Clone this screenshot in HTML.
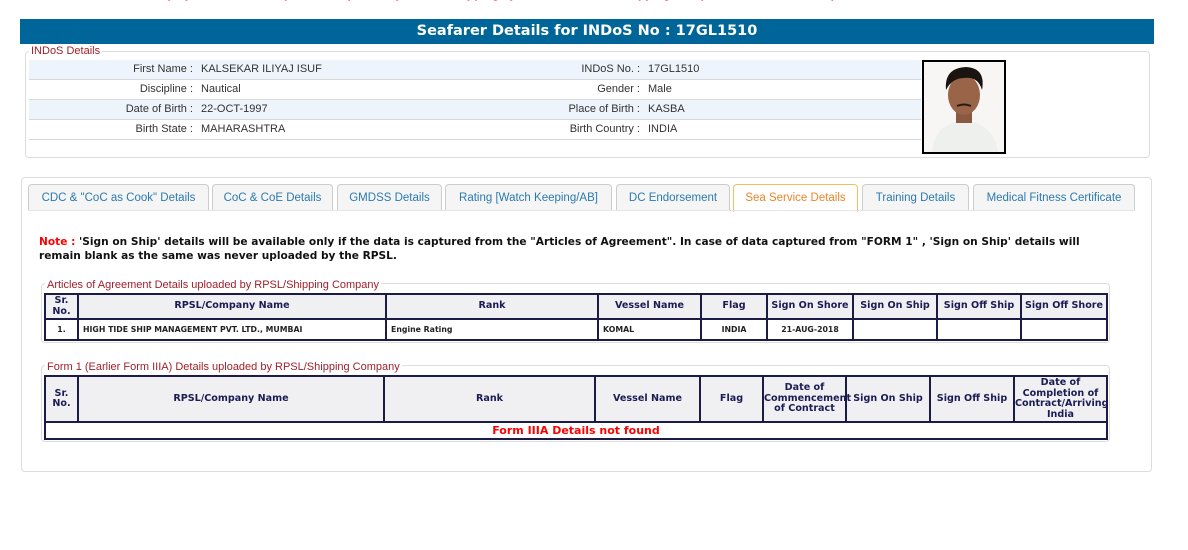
<!DOCTYPE html>
<html><head><meta charset="utf-8"><style>
*{box-sizing:border-box;margin:0;padding:0}
body{width:1188px;height:550px;background:#fff;position:relative;overflow:hidden;font-family:"Liberation Sans",Arial,sans-serif}
.abs{position:absolute}
.topred{left:20px;top:-13px;font-size:12px;color:#e00;font-weight:bold;white-space:nowrap}
.hdr{left:20px;top:19px;width:1134px;height:25px;background:#006699;color:#fff;font-family:"DejaVu Sans",Verdana,sans-serif;font-weight:bold;font-size:14.5px;text-align:center;line-height:25px}
.fs{border:1px solid #ddd;border-radius:4px}
.legend{font-size:11px;color:#a0202a;background:#fff;padding:0 2px;line-height:12px}
.row{left:29px;width:892px;height:20px;border-bottom:1px solid #d8d8d8;font-size:11px;color:#333;line-height:19px}
.row.a{background:#eef4fb}
.row span{position:absolute;white-space:nowrap}
.l1{right:728px}.v1{left:172px}.l2{right:281px}.v2{left:619px}
.tab{top:184px;height:27px;border:1px solid #ccc;border-bottom:none;border-radius:4px 4px 0 0;background:#f5f5f5;color:#2a7ab0;font-size:11.5px;text-align:center;line-height:26px}
.tab.on{background:#fff;border-color:#f0c060;color:#e8862a;height:28px}
.note{left:39px;top:236px;font-family:"DejaVu Sans",Verdana,sans-serif;font-weight:bold;font-size:10.6px;line-height:13.5px;color:#111;width:1080px}
table{position:absolute;border-collapse:collapse;border:2px solid #1b1b45;font-family:"DejaVu Sans",Verdana,sans-serif;font-weight:bold;color:#1b1b55;table-layout:fixed}
th{background:#f0f0f2;border:2px solid #1b1b45;font-size:9.6px;line-height:10.5px;padding:0;text-align:center}
td{border:2px solid #1b1b45;font-size:7.8px;color:#222;padding:0 4px}
</style></head><body>
<div class="abs topred">Note : Seafarer details displayed below are as per data captured by the DG Shipping system from RPSL / Shipping Companies and institutes uploaded data</div>
<div class="abs hdr">Seafarer Details for INDoS No : 17GL1510</div>
<div class="abs fs" style="left:25px;top:51px;width:1125px;height:107px"></div>
<div class="abs legend" style="left:29px;top:45px">INDoS Details</div>
<div class="abs row a" style="top:60px"><span class="l1">First Name :</span><span class="v1">KALSEKAR ILIYAJ ISUF</span><span class="l2">INDoS No. :</span><span class="v2">17GL1510</span></div>
<div class="abs row" style="top:80px"><span class="l1">Discipline :</span><span class="v1">Nautical</span><span class="l2">Gender :</span><span class="v2">Male</span></div>
<div class="abs row a" style="top:100px"><span class="l1">Date of Birth :</span><span class="v1">22-OCT-1997</span><span class="l2">Place of Birth :</span><span class="v2">KASBA</span></div>
<div class="abs row" style="top:120px"><span class="l1">Birth State :</span><span class="v1">MAHARASHTRA</span><span class="l2">Birth Country :</span><span class="v2">INDIA</span></div>
<div class="abs" style="left:922px;top:60px;width:84px;height:94px;border:2px solid #000;background:#fafafa;overflow:hidden">
<svg width="80" height="90" viewBox="0 0 80 90"><rect width="80" height="90" fill="#f8f6f4"/><path d="M8 90 Q10 62 40 58 Q70 62 74 90Z" fill="#eef0ee"/><rect x="32" y="45" width="16" height="16" fill="#8a5a40"/><ellipse cx="40" cy="33" rx="16" ry="20" fill="#9a6448"/><path d="M22 28 Q20 6 42 5 Q62 6 58 28 Q54 14 40 16 Q28 16 22 28Z" fill="#1a1410"/><path d="M33 44 Q40 41 47 44" stroke="#2a1a10" stroke-width="2" fill="none"/></svg></div>

<div class="abs fs" style="left:21px;top:177px;width:1131px;height:295px"></div>
<div class="abs tab" style="left:28px;width:181px">CDC &amp; "CoC as Cook" Details</div>
<div class="abs tab" style="left:212px;width:121px">CoC &amp; CoE Details</div>
<div class="abs tab" style="left:337px;width:105px">GMDSS Details</div>
<div class="abs tab" style="left:445px;width:167px">Rating [Watch Keeping/AB]</div>
<div class="abs tab" style="left:616px;width:114px">DC Endorsement</div>
<div class="abs tab on" style="left:733px;width:125px">Sea Service Details</div>
<div class="abs tab" style="left:862px;width:107px">Training Details</div>
<div class="abs tab" style="left:973px;width:162px">Medical Fitness Certificate</div>
<div class="abs" style="left:28px;top:210px;width:1107px;height:1px;background:#e4e4e4"></div>

<div class="abs note"><span style="color:#f00">Note :</span> 'Sign on Ship' details will be available only if the data is captured from the "Articles of Agreement". In case of data captured from "FORM 1" , 'Sign on Ship' details will remain blank as the same was never uploaded by the RPSL.</div>

<div class="abs fs" style="left:41px;top:283px;width:1069px;height:60px"></div>
<div class="abs legend" style="left:45px;top:279px">Articles of Agreement Details uploaded by RPSL/Shipping Company</div>
<table style="left:44px;top:293px;width:1062px">
<colgroup><col style="width:33px"><col style="width:308px"><col style="width:212px"><col style="width:103px"><col style="width:66px"><col style="width:86px"><col style="width:84px"><col style="width:84px"><col style="width:86px"></colgroup>
<tr style="height:25px"><th>Sr.<br>No.</th><th>RPSL/Company Name</th><th>Rank</th><th>Vessel Name</th><th>Flag</th><th>Sign On Shore</th><th>Sign On Ship</th><th>Sign Off Ship</th><th>Sign Off Shore</th></tr>
<tr style="height:21px"><td style="text-align:center">1.</td><td>HIGH TIDE SHIP MANAGEMENT PVT. LTD., MUMBAI</td><td>Engine Rating</td><td>KOMAL</td><td style="text-align:center">INDIA</td><td style="text-align:center">21-AUG-2018</td><td></td><td></td><td></td></tr>
</table>

<div class="abs fs" style="left:41px;top:365px;width:1069px;height:77px"></div>
<div class="abs legend" style="left:45px;top:361px">Form 1 (Earlier Form IIIA) Details uploaded by RPSL/Shipping Company</div>
<table style="left:44px;top:375px;width:1062px">
<colgroup><col style="width:33px"><col style="width:306px"><col style="width:211px"><col style="width:105px"><col style="width:63px"><col style="width:83px"><col style="width:84px"><col style="width:84px"><col style="width:93px"></colgroup>
<tr style="height:46px"><th>Sr.<br>No.</th><th>RPSL/Company Name</th><th>Rank</th><th>Vessel Name</th><th>Flag</th><th>Date of Commencement of Contract</th><th>Sign On Ship</th><th>Sign Off Ship</th><th>Date of Completion of Contract/Arriving India</th></tr>
<tr style="height:17px"><td colspan="9" style="text-align:center;color:#f00;font-size:11px;border-top:2px solid #1b1b45">Form IIIA Details not found</td></tr>
</table>
</body></html>
